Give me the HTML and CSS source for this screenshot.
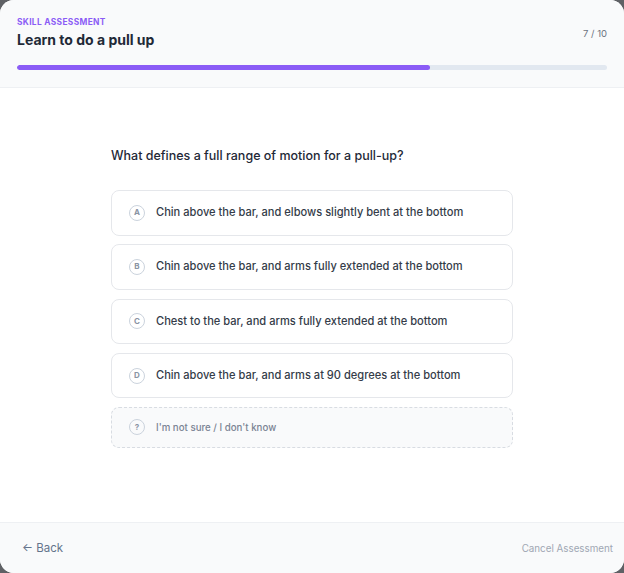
FILE: index.html
```html
<!DOCTYPE html>
<html lang="en">
<head>
    <meta charset="UTF-8">
    <meta name="viewport" content="width=device-width, initial-scale=1.0">
    <title>Skill Assessment</title>
    <link rel="stylesheet" href="styles.css">
</head>
<body>
    <div class="modal">
        <div class="header">
            <div class="header-top">
                <div>
                    <p class="eyebrow">Skill Assessment</p>
                    <h1>Learn to do a pull up</h1>
                </div>
                <span class="count">7 / 10</span>
            </div>
            <div class="progress"><div class="progress-fill" style="width: 70%"></div></div>
        </div>

        <div class="content">
            <div class="quiz">
                <p class="question">What defines a full range of motion for a pull-up?</p>
                <div class="options">
                    <button class="option"><span class="letter">A</span>Chin above the bar, and elbows slightly bent at the bottom</button>
                    <button class="option"><span class="letter">B</span>Chin above the bar, and arms fully extended at the bottom</button>
                    <button class="option"><span class="letter">C</span>Chest to the bar, and arms fully extended at the bottom</button>
                    <button class="option"><span class="letter">D</span>Chin above the bar, and arms at 90 degrees at the bottom</button>
                    <button class="option unsure"><span class="letter">?</span>I'm not sure / I don't know</button>
                </div>
            </div>
        </div>

        <div class="footer">
            <button class="back">&larr; Back</button>
            <button class="cancel">Cancel Assessment</button>
        </div>
    </div>
</body>
</html>
```

FILE: styles.css
```css
body {
    font-family: Inter, "Noto Sans", sans-serif;
    background-color: #5f6165;
    margin: 0;
}

.modal {
    height: 573px;
    background-color: #fff;
    border-radius: 14px;
    overflow: hidden;
    display: flex;
    flex-direction: column;
}

.header {
    background-color: #f9fafb;
    border-bottom: 1px solid #eef0f3;
    padding: 17px 17px 17px;
}

.header-top {
    display: flex;
    justify-content: space-between;
    align-items: center;
}

.eyebrow {
    margin: 0;
    font-size: 8.4px;
    font-weight: 700;
    letter-spacing: 0.04em;
    text-transform: uppercase;
    color: #8b5cf6;
    line-height: 11px;
}

.header h1 {
    margin: 2px 0 0;
    font-size: 14px;
    font-weight: 700;
    color: #1f2937;
    line-height: 19px;
}

.count {
    font-size: 9.5px;
    color: #6b7280;
}

.progress {
    margin-top: 16px;
    height: 5px;
    border-radius: 3px;
    background-color: #e2e8f0;
    overflow: hidden;
}

.progress-fill {
    height: 100%;
    background-color: #8b5cf6;
    border-radius: 3px;
}

.content {
    flex: 1;
    display: flex;
    justify-content: center;
    padding-top: 58px;
}

.quiz {
    width: 402px;
}

.question {
    margin: 0 0 24px;
    font-size: 12.5px;
    font-weight: 500;
    color: #1f2937;
    line-height: 20px;
}

.options {
    display: flex;
    flex-direction: column;
    gap: 8.75px;
}

.option {
    display: flex;
    align-items: center;
    gap: 11px;
    width: 100%;
    padding: 13px 17px;
    background-color: #fff;
    border: 1px solid #e5e7eb;
    border-radius: 8px;
    font-family: inherit;
    font-size: 11.1px;
    font-weight: 500;
    color: #343c49;
    line-height: 17.5px;
    text-align: left;
    cursor: pointer;
}

.letter {
    width: 16px;
    height: 16px;
    box-sizing: border-box;
    border: 1.6px solid #cbd3dd;
    border-radius: 50%;
    display: flex;
    align-items: center;
    justify-content: center;
    font-size: 8px;
    font-weight: 700;
    color: #8a94a3;
    flex-shrink: 0;
}

.option.unsure {
    padding: 10.5px 17px;
    background-color: #f9fafb;
    border-style: dashed;
    border-color: #d8dce2;
    font-size: 9.7px;
    color: #7b8494;
}

.footer {
    height: 50px;
    background-color: #f9fafb;
    border-top: 1px solid #eef0f3;
    display: flex;
    justify-content: space-between;
    align-items: center;
    padding: 0 11px 0 22px;
}

.back,
.cancel {
    background: none;
    border: none;
    padding: 0;
    font-family: inherit;
    cursor: pointer;
}

.back {
    font-size: 11.5px;
    color: #64748b;
}

.cancel {
    font-size: 9.8px;
    color: #a0a7b3;
}
```
